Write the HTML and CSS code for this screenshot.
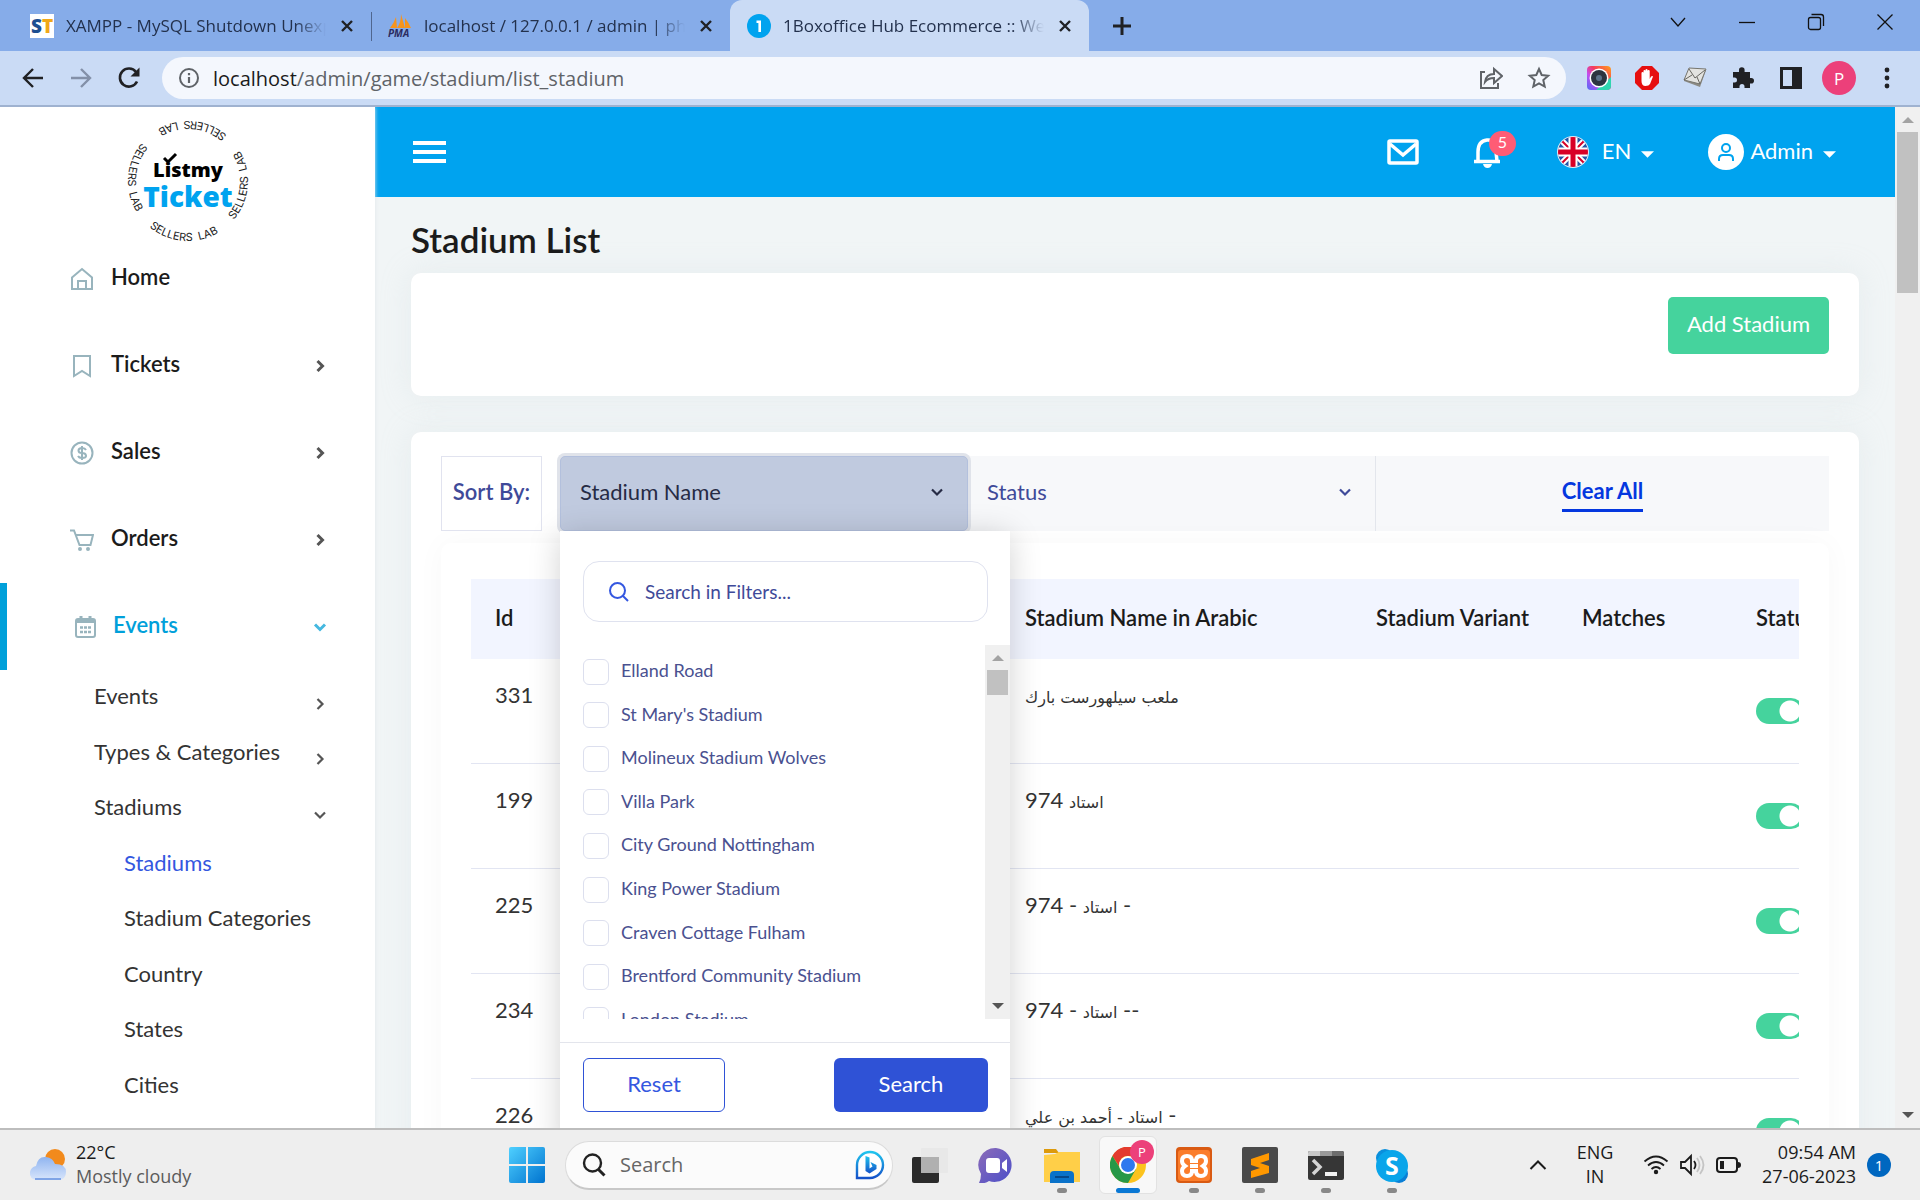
FILE: index.html
```html
<!DOCTYPE html>
<html lang="en">
<head>
<meta charset="utf-8">
<title>1Boxoffice Hub Ecommerce</title>
<link rel="stylesheet" href="styles.css">
</head>
<body>
<svg class="defs" aria-hidden="true">
  <symbol id="x" viewBox="0 0 14 14"><path d="M2 2l10 10M12 2L2 12" stroke="currentColor" stroke-width="2.4" fill="none"/></symbol>
  <symbol id="chev" viewBox="0 0 14 14"><path d="M2 4.500l5 5 5-5" stroke="currentColor" stroke-width="3" fill="none"/></symbol>
  <symbol id="chev-thin" viewBox="0 0 14 14"><path d="M2 4.500l5 5 5-5" stroke="currentColor" stroke-width="2.200" fill="none"/></symbol>
  <symbol id="up" viewBox="0 0 12 6"><path d="M0 6l6-6 6 6z" fill="currentColor"/></symbol>
  <symbol id="down" viewBox="0 0 12 6"><path d="M0 0l6 6 6-6z" fill="currentColor"/></symbol>
</svg>

<header class="tabs">
  <div class="tab">
    <svg class="fav" viewBox="0 0 24 24"><rect width="24" height="24" fill="#fff"/><text x="1" y="19" font-family="Open Sans" font-weight="800" font-size="19" fill="#1d4f91">S<tspan fill="#f0a818">T</tspan></text></svg>
    <span class="tab-title">XAMPP - MySQL Shutdown Unexpectedly</span>
    <button class="icon-btn" aria-label="Close tab"><svg class="i14"><use href="#x"/></svg></button>
  </div>
  <div class="tab sep">
    <svg class="fav" viewBox="0 0 24 24"><path d="M2 14Q6 9 8 3l1 11zM9 14q4-5 4-14l4 14zM17 14V4q4 5 6 10z" fill="#f7941d"/><text x="0" y="23" font-family="Open Sans" font-weight="700" font-style="italic" font-size="10" fill="#2b2b60">PMA</text></svg>
    <span class="tab-title">localhost / 127.0.0.1 / admin | phpMyAdmin</span>
    <button class="icon-btn" aria-label="Close tab"><svg class="i14"><use href="#x"/></svg></button>
  </div>
  <div class="tab active">
    <svg class="fav" viewBox="0 0 24 24"><circle cx="12" cy="12" r="12" fill="#00a3ef"/><path d="M9.500 6.500h4.500v11.500h-2.600V9H9.500z" fill="#fff"/></svg>
    <span class="tab-title">1Boxoffice Hub Ecommerce :: Welcome</span>
    <button class="icon-btn" aria-label="Close tab"><svg class="i14"><use href="#x"/></svg></button>
  </div>
  <button class="icon-btn new-tab" aria-label="New tab"><svg class="i18" viewBox="0 0 18 18"><path d="M9 0v18M0 9h18" stroke="#202124" stroke-width="3"/></svg></button>
  <div class="win">
    <button class="icon-btn" aria-label="Search tabs"><svg class="i18" viewBox="0 0 18 18"><path d="M2 5l7 8 7-8" class="thin"/></svg></button>
    <button class="icon-btn" aria-label="Minimize"><svg class="i18" viewBox="0 0 18 18"><path d="M1 9.500h16" class="thin"/></svg></button>
    <button class="icon-btn" aria-label="Restore"><svg class="i18" viewBox="0 0 18 18"><rect x="1.500" y="4.500" width="12" height="12" rx="2" class="thin"/><path d="M4.500 1.500H14q2.500 0 2.500 2.500v9" class="thin"/></svg></button>
    <button class="icon-btn" aria-label="Close"><svg class="i18" viewBox="0 0 18 18"><path d="M1.500 1.500l15 15M16.500 1.500l-15 15" class="thin"/></svg></button>
  </div>
</header>

<nav class="toolbar" aria-label="Browser">
  <button class="icon-btn" aria-label="Back"><svg class="i24" viewBox="0 0 24 24"><path d="M22 12H3M12 3l-9 9 9 9" stroke="#202124" stroke-width="2.400" fill="none"/></svg></button>
  <button class="icon-btn" aria-label="Forward"><svg class="i24" viewBox="0 0 24 24"><path d="M2 12h19M12 3l9 9-9 9" stroke="#8390a8" stroke-width="2.400" fill="none"/></svg></button>
  <button class="icon-btn" aria-label="Reload"><svg class="i24" viewBox="0 0 24 24"><path d="M20 15.500A9 9 0 1 1 19 6" stroke="#202124" stroke-width="2.600" fill="none"/><path d="M22.500 1.500v9h-9z" fill="#202124"/></svg></button>
  <div class="omnibox">
    <svg class="i22" viewBox="0 0 22 22"><circle cx="11" cy="11" r="9" fill="none" stroke="#5f6368" stroke-width="2"/><path d="M11 10v6M11 6v2.200" stroke="#5f6368" stroke-width="2.200"/></svg>
    <span class="url"><b>localhost</b>/admin/game/stadium/list_stadium</span>
    <svg class="i24" viewBox="0 0 24 24"><path d="M6 6H2v16h17v-5" class="grey2"/><path d="M6 16q1-8 9-8V3l8 7-8 7v-5q-6 0-9 4z" class="grey2"/></svg>
    <svg class="i24" viewBox="0 0 24 24"><path d="M12 3l2.700 6 6.500.7-4.900 4.400 1.400 6.500L12 17.300l-5.700 3.300 1.400-6.500L2.800 9.700 9.300 9z" class="grey2"/></svg>
  </div>
  <div class="exts">
    <svg class="i24" viewBox="0 0 24 24"><defs><linearGradient id="rb" x1="0" y1="1" x2="1" y2="0"><stop offset="0" stop-color="#4f6cf5"/><stop offset=".35" stop-color="#c44df0"/><stop offset=".6" stop-color="#f53a5e"/><stop offset="1" stop-color="#ffa31a"/></linearGradient></defs><rect width="24" height="24" rx="4" fill="url(#rb)"/><path d="M9 24h11q4 0 4-4v-9z" fill="#2fd6b0"/><circle cx="12" cy="12" r="9.500" fill="#fff"/><circle cx="12" cy="12" r="8" fill="#2c3440"/><circle cx="12" cy="12" r="3" fill="#5b7188"/></svg>
    <svg class="i24" viewBox="0 0 24 24"><path d="M7 0h10l7 7v10l-7 7H7l-7-7V7z" fill="#e60f0f"/><path d="M6.500 12V7q0-1 1-1t1 1v4V5q0-1 1-1t1 1v5.500V4q0-1 1-1t1 1v6.500V5q0-1 1.100-1t1.100 1v8l1.300-2.500q1.500-1 2 0L15 18q-1 2-4.500 2-4 0-4-5z" fill="#fff"/></svg>
    <svg class="i24" viewBox="0 0 24 24"><path d="M6 3l17 1-6 17-16-6z" fill="#8c8b84"/><path d="M6 2l17 1-6 15-16-4z" fill="#e3e3e0" stroke="#77766f"/><path d="M6 3l6 9L22 4M1 14l8-5M17 18l-3-7" stroke="#66655f" fill="none"/></svg>
    <svg class="i24" viewBox="0 0 24 24"><path d="M2 6h6V4a2.800 2.800 0 0 1 5.600 0v2H19v6h1.200a2.800 2.800 0 0 1 0 5.600H19V22h-5.500v-1.500a2.500 2.500 0 0 0-5 0V22H2v-5.500h1.500a2.500 2.500 0 0 0 0-5H2z" fill="#202124"/></svg>
    <svg class="i24" viewBox="0 0 24 24"><path d="M1 1h22v22H1zM4 4v16h9V4z" fill="#202124" fill-rule="evenodd"/></svg>
    <span class="profile">P</span>
    <svg class="i24" viewBox="0 0 24 24"><g fill="#202124"><circle cx="12" cy="4" r="2.400"/><circle cx="12" cy="12" r="2.400"/><circle cx="12" cy="20" r="2.400"/></g></svg>
  </div>
</nav>

<div class="page">
  <aside class="side">
    <svg class="logo" viewBox="0 0 130 130" role="img" aria-label="Listmy Ticket">
      <defs><path id="ring" d="M5 65a60 60 0 0 0 120 0a60 60 0 0 0 -120 0a60 60 0 0 0 120 0"/></defs>
      <g class="ring"><text><textPath href="#ring" startOffset="52">SELLERS&#160; LAB</textPath></text><text><textPath href="#ring" startOffset="146">SELLERS&#160; LAB</textPath></text><text><textPath href="#ring" startOffset="240">SELLERS&#160; LAB</textPath></text><text><textPath href="#ring" startOffset="335">SELLERS&#160; LAB</textPath></text></g>
      <text x="65" y="61" class="l1">Listmy</text><text x="65" y="91" class="l2">Ticket</text>
      <path d="M41 42l4 4 8-8" stroke="#000" stroke-width="3" fill="none"/>
    </svg>
    <ul class="menu">
      <li><a href="#"><svg class="i24 mi" viewBox="0 0 24 24"><path d="M2 10.500L12 2l10 8.500V22H2zM8 22v-8h8v8M8 22h8"/></svg><span>Home</span></a></li>
      <li><a href="#"><svg class="i24 mi" viewBox="0 0 24 24"><path d="M4 2h16v20l-8-5-8 5z"/></svg><span>Tickets</span><svg class="i14 right"><use href="#chev"/></svg></a></li>
      <li><a href="#"><svg class="i24 mi" viewBox="0 0 24 24"><circle cx="12" cy="12" r="10.500"/><path d="M16 9q-1-2-4-2-3.500 0-3.500 2.500T12 12t4 2.500-4 2.500q-3 0-4-2M12 5v14"/></svg><span>Sales</span><svg class="i14 right"><use href="#chev"/></svg></a></li>
      <li><a href="#"><svg class="i24 mi" viewBox="0 0 24 24"><path d="M0 2.500h4L9.500 17h11L23 7H6"/><circle cx="10" cy="21" r="1"/><circle cx="18" cy="21" r="1"/></svg><span>Orders</span><svg class="i14 right"><use href="#chev"/></svg></a></li>
      <li class="current"><a href="#"><svg class="i24 mi" viewBox="0 0 24 24"><rect x="3" y="4" width="19" height="18" rx="2"/><path d="M3 6.500h19M8 1v4M17 1v4" stroke-width="3"/><path d="M7 12.500h3m1 0h3m1 0h3M7 17h3m1 0h3m1 0h3" stroke-width="2.600"/></svg><span>Events</span><svg class="i14"><use href="#chev"/></svg></a></li>
    </ul>
    <ul class="submenu">
      <li><a href="#">Events<svg class="i14 right"><use href="#chev-thin"/></svg></a></li>
      <li><a href="#">Types &amp; Categories<svg class="i14 right"><use href="#chev-thin"/></svg></a></li>
      <li><a href="#">Stadiums<svg class="i14"><use href="#chev-thin"/></svg></a></li>
      <li class="deep on"><a href="#">Stadiums</a></li>
      <li class="deep"><a href="#">Stadium Categories</a></li>
      <li class="deep"><a href="#">Country</a></li>
      <li class="deep"><a href="#">States</a></li>
      <li class="deep"><a href="#">Cities</a></li>
    </ul>
  </aside>

  <div class="content">
    <header class="topbar">
      <button class="icon-btn burger" aria-label="Menu"><svg viewBox="0 0 33 22"><path d="M0 2h33M0 11h33M0 20h33" stroke="#fff" stroke-width="4"/></svg></button>
      <button class="icon-btn mail" aria-label="Messages"><svg viewBox="0 0 32 26"><rect x="2" y="2" width="28" height="22" rx="1" class="w"/><path d="M3 5l13 11L29 5" class="w"/></svg></button>
      <button class="icon-btn bell" aria-label="Notifications"><svg viewBox="0 0 30 32"><path d="M5 25v-9q0-11 9-12t9 12l1 9M1 25.500h26" class="w"/><path d="M10 28h9q-1 4-4.500 4T10 28z" fill="#fff"/></svg><span class="badge">5</span></button>
      <button class="pick lang"><svg class="flag" viewBox="0 0 32 32"><defs><clipPath id="fc"><circle cx="16" cy="16" r="15"/></clipPath></defs><circle cx="16" cy="16" r="16" fill="#dfe8f4"/><g clip-path="url(#fc)"><rect width="32" height="32" fill="#2455a8"/><path d="M0 0l32 32M32 0L0 32" stroke="#fff" stroke-width="6"/><path d="M0 0l32 32M32 0L0 32" stroke="#d80027" stroke-width="2"/><path d="M16 0v32M0 16h32" stroke="#fff" stroke-width="9"/><path d="M16 0v32M0 16h32" stroke="#d80027" stroke-width="5"/></g></svg><span>EN</span><svg class="caret"><use href="#down"/></svg></button>
      <button class="pick user"><svg class="ava" viewBox="0 0 36 36"><circle cx="18" cy="18" r="18" fill="#fff"/><circle cx="18" cy="14" r="4" fill="none" stroke="#00a3ef" stroke-width="2"/><path d="M11 27v-2q0-4 4-4h6q4 0 4 4v2" fill="none" stroke="#00a3ef" stroke-width="2"/></svg><span>Admin</span><svg class="caret"><use href="#down"/></svg></button>
    </header>

    <main>
      <h1>Stadium List</h1>
      <section class="card actions"><button class="add">Add Stadium</button></section>
      <section class="card list">
        <div class="filters">
          <span class="sort">Sort By:</span>
          <div class="filter-wrap">
            <button class="filter open" aria-expanded="true">Stadium Name<svg class="i14"><use href="#chev-thin"/></svg></button>
            <div class="drop">
              <div class="drop-search">
                <svg viewBox="0 0 20 20"><circle cx="8.500" cy="8.500" r="7.500"/><path d="M14 14l5 5"/></svg>
                <input type="text" placeholder="Search in Filters..." aria-label="Search in Filters">
              </div>
              <div class="options">
                <div class="opts">
                  <label><input type="checkbox"><span>Elland Road</span></label>
                  <label><input type="checkbox"><span>St Mary's Stadium</span></label>
                  <label><input type="checkbox"><span>Molineux Stadium Wolves</span></label>
                  <label><input type="checkbox"><span>Villa Park</span></label>
                  <label><input type="checkbox"><span>City Ground Nottingham</span></label>
                  <label><input type="checkbox"><span>King Power Stadium</span></label>
                  <label><input type="checkbox"><span>Craven Cottage Fulham</span></label>
                  <label><input type="checkbox"><span>Brentford Community Stadium</span></label>
                  <label><input type="checkbox"><span>London Stadium</span></label>
                </div>
                <div class="bar"><svg class="arrow off"><use href="#up"/></svg><i class="thumb short"></i><svg class="arrow end"><use href="#down"/></svg></div>
              </div>
              <div class="drop-foot"><button class="reset">Reset</button><button class="search">Search</button></div>
            </div>
          </div>
          <button class="filter status">Status<svg class="i14"><use href="#chev-thin"/></svg></button>
          <div class="clear"><a href="#">Clear All</a></div>
        </div>
        <div class="panel">
          <div class="scroll">
            <table>
              <colgroup><col class="c1"><col class="c2"><col class="c3"><col class="c4"><col class="c5"><col class="c6"></colgroup>
              <thead><tr><th>Id</th><th></th><th>Stadium Name in Arabic</th><th>Stadium Variant</th><th>Matches</th><th>Status</th></tr></thead>
              <tbody>
                <tr><td>331</td><td></td><td><span class="ar">ملعب سيلهورست بارك</span></td><td></td><td></td><td><input class="switch" type="checkbox" checked aria-label="Status 331"></td></tr>
                <tr><td>199</td><td></td><td>974 <span class="ar">استاد</span></td><td></td><td></td><td><input class="switch" type="checkbox" checked aria-label="Status 199"></td></tr>
                <tr><td>225</td><td></td><td>974 - <span class="ar">استاد</span> -</td><td></td><td></td><td><input class="switch" type="checkbox" checked aria-label="Status 225"></td></tr>
                <tr><td>234</td><td></td><td>974 - <span class="ar">استاد</span> --</td><td></td><td></td><td><input class="switch" type="checkbox" checked aria-label="Status 234"></td></tr>
                <tr><td>226</td><td></td><td><span class="ar">استاد - أحمد بن علي</span> -</td><td></td><td></td><td><input class="switch" type="checkbox" checked aria-label="Status 226"></td></tr>
              </tbody>
            </table>
          </div>
        </div>
      </section>
    </main>
  </div>
  <div class="bar main-bar"><svg class="arrow off"><use href="#up"/></svg><i class="thumb"></i><svg class="arrow end"><use href="#down"/></svg></div>
</div>

<footer class="taskbar">
  <div class="weather">
    <svg viewBox="0 0 38 34"><defs><linearGradient id="cl" x1="0" y1="0" x2="0" y2="1"><stop offset="0" stop-color="#8fb4f0"/><stop offset="1" stop-color="#d8e5fb"/></linearGradient></defs><circle cx="26" cy="11" r="10" fill="#f28a1c"/><path d="M8 32q-8-1-7-8 1-5 6-6Q9 8 17 9q7 1 9 7 11 0 11 8 0 7-7 8z" fill="url(#cl)"/><path d="M6 31h26" stroke="#7fa4e6" stroke-width="2"/></svg>
    <p>22°C<br><span>Mostly cloudy</span></p>
  </div>
  <div class="dock">
    <button class="icon-btn start" aria-label="Start"><svg class="i36" viewBox="0 0 36 36"><defs><linearGradient id="wn" x1="0" y1="0" x2="1" y2="1"><stop offset="0" stop-color="#4fd0ff"/><stop offset="1" stop-color="#0073cf"/></linearGradient></defs><path d="M2 0h15v17H0V2q0-2 2-2zM19 0h15q2 0 2 2v15H19zM0 19h17v17H2q-2 0-2-2zM19 19h17v15q0 2-2 2H19z" fill="url(#wn)"/></svg></button>
    <div class="find">
      <svg class="i24" viewBox="0 0 24 24"><circle cx="10.500" cy="10" r="8.500" fill="none" stroke="#222" stroke-width="2.400"/><path d="M16.500 16.500l6 6" stroke="#222" stroke-width="3"/></svg>
      <input type="text" placeholder="Search" aria-label="Search">
      <svg class="i30" viewBox="0 0 30 30"><defs><linearGradient id="bg" x1="0" y1="0" x2="0" y2="1"><stop offset="0" stop-color="#20c5ee"/><stop offset="1" stop-color="#1552c9"/></linearGradient></defs><path d="M2 28V15A13 13 0 1 1 15 28z" fill="#fff" stroke="url(#bg)" stroke-width="2.400"/><path d="M10.500 6l4 1.500v11l3-2-2-4.500 6 3v4l-7 4.500-4-2.500z" fill="url(#bg)"/></svg>
    </div>
    <div class="apps">
      <a href="#" aria-label="Task view"><svg class="i36" viewBox="0 0 36 36"><rect x="0" y="10" width="27" height="26" rx="2" fill="#2b2b2b"/><rect x="9" y="1" width="27" height="25" rx="1" fill="#e8e8e8" opacity=".94"/><path d="M9 10h18v16H9z" fill="#b0b0b0"/></svg></a>
      <a href="#" aria-label="Chat"><svg class="i36" viewBox="0 0 36 36"><defs><linearGradient id="ch" x1="0" y1="0" x2="1" y2="1"><stop offset="0" stop-color="#8c6bb8"/><stop offset="1" stop-color="#4b4fc9"/></linearGradient></defs><path d="M18 1a17 17 0 1 1-7 33q-4 3-10 2 2-4 2-9A17 17 0 0 1 18 1z" fill="url(#ch)"/><rect x="8" y="11" width="14" height="15" rx="3" fill="#fff"/><path d="M24 16l5-4v13l-5-4z" fill="#fff"/></svg></a>
      <a href="#" class="run" aria-label="Files"><svg class="i36" viewBox="0 0 36 36"><path d="M0 2h12l3 4H0z" fill="#dd9a0b"/><path d="M0 8l11-1 4-2h21v30H0z" fill="#ffcf48"/><path d="M6 36V28q0-4 4-4h16q4 0 4 4v8z" fill="#0a72c9"/><path d="M11 30h14" stroke="#06488a" stroke-width="2"/></svg></a>
      <a href="#" class="run front" aria-label="Chrome"><svg class="i36" viewBox="0 4 36 36"><circle cx="18" cy="22" r="18" fill="#fcc31e"/><path d="M2.400 13A18 18 0 0 1 34 13H18q-6 0-8 5l-1 5z" fill="#e33b2e"/><path d="M2.400 13A18 18 0 0 0 18 40l8-14-8 4q-5 0-8-5z" fill="#279847"/><circle cx="18" cy="22" r="9" fill="#fff"/><circle cx="18" cy="22" r="7" fill="#2f79ee"/></svg><span class="mini">P</span></a>
      <a href="#" class="run" aria-label="XAMPP"><svg class="i36" viewBox="0 0 36 36"><rect width="36" height="36" rx="4" fill="#d95a12"/><rect x="2" y="3" width="32" height="31" rx="3" fill="#fb7d2b"/><path d="M11 9q5 0 5 5h4q0-5 5-5t5 5q0 3-3 5 3 2 3 5 0 5-5 5t-5-5h-4q0 5-5 5t-5-5q0-3 3-5-3-2-3-5 0-5 5-5z" fill="none" stroke="#fff" stroke-width="4"/><path d="M14 19h8" stroke="#fff" stroke-width="4"/></svg></a>
      <a href="#" class="run" aria-label="Sublime Text"><svg class="i36" viewBox="0 0 36 36"><rect width="36" height="36" rx="2" fill="#4a4a4a"/><path d="M9 12l18-6v7l-9 3 9 3v7L9 31v-7l9-3-9-3z" fill="#ff9800"/></svg></a>
      <a href="#" class="run" aria-label="Terminal"><svg class="i36" viewBox="0 0 36 36"><rect y="4" width="36" height="29" rx="2" fill="#363636"/><path d="M0 9V6q0-2 2-2h10v5z" fill="#c9c9c9"/><path d="M12 4h12v5H12z" fill="#999"/><path d="M24 4h10q2 0 2 2v3H24z" fill="#6d6d6d"/><path d="M5 13l7 7-7 7" stroke="#d5d5d5" stroke-width="3.500" fill="none"/><path d="M17 27h12" stroke="#f2f2f2" stroke-width="4"/></svg></a>
      <a href="#" class="run" aria-label="Skype"><svg class="i36" viewBox="0 0 36 36"><circle cx="11" cy="11" r="9" fill="#0a8fdc"/><circle cx="25" cy="27" r="9" fill="#0a7fd6"/><circle cx="18" cy="19" r="16" fill="#0aa5ea"/><text x="18" y="28" text-anchor="middle" font-family="Open Sans" font-weight="700" font-size="25" fill="#fff">S</text></svg></a>
    </div>
  </div>
  <div class="tray">
    <svg class="i18" viewBox="0 0 18 18"><path d="M1.500 13L9 5.500l7.500 7.500" stroke="#1b1b1b" stroke-width="2" fill="none"/></svg>
    <p class="kb">ENG<br>IN</p>
    <div class="sys">
      <svg class="i26" viewBox="0 0 26 26"><path d="M1.500 9.500q11.500-10 23 0M5 13.500q8-7 16 0M8.500 17q4.500-4 9 0" stroke="#1b1b1b" stroke-width="1.800" fill="none"/><circle cx="13" cy="20" r="2.200" fill="#1b1b1b"/></svg>
      <svg class="i26" viewBox="0 0 26 26"><path d="M2 10h4l6-6v18l-6-6H2z" stroke="#1b1b1b" stroke-width="1.800" fill="none"/><path d="M15 9q3 4 0 8" stroke="#1b1b1b" stroke-width="1.800" fill="none"/><path d="M18 6q5 7 0 14M21 4q7 9 0 18" stroke="#c4c4c4" stroke-width="1.800" fill="none"/></svg>
      <svg class="i26" viewBox="0 0 26 26"><rect x="2" y="6" width="20" height="14" rx="3" fill="none" stroke="#1b1b1b" stroke-width="2"/><path d="M5 9h4v8H5zM23 10q3 0 3 3t-3 3z" fill="#1b1b1b"/></svg>
    </div>
    <p class="clock">09:54 AM<br>27-06-2023</p>
    <span class="count">1</span>
  </div>
</footer>
</body>
</html>
```
FILE: styles.css
```css
*{box-sizing:border-box}
body{margin:0;height:100vh;display:flex;flex-direction:column;overflow:hidden;font-family:Lato,"DejaVu Sans",sans-serif;font-size:22px;color:#1b1b1b;background:#fff}
button,input{font:inherit;color:inherit}
button{border:0;background:none;padding:0}
a{color:inherit;text-decoration:none}
ul,p,h1{margin:0;padding:0;list-style:none}
svg{display:block;flex:none}
.defs{position:absolute;width:0;height:0}
.i14{width:14px;height:14px}.i18{width:18px;height:18px}.i22{width:22px;height:22px}.i24{width:24px;height:24px}
.i26{width:26px;height:26px}.i30{width:30px;height:30px}.i36{width:36px;height:36px}
.icon-btn{display:grid;place-items:center;flex:none}
.thin{fill:none;stroke:#111;stroke-width:1.3}
.grey2{fill:none;stroke:#5f6368;stroke-width:2}
.right{transform:rotate(-90deg)}

/* browser chrome */
.tabs,.toolbar,.taskbar{font-family:"Open Sans",sans-serif;flex:none}
.tabs{display:flex;height:51px;background:#86ace9}
.tab{display:flex;align-items:center;gap:12px;width:359px;padding:0 17px;font-size:17px;color:#23314d}
.tab:first-child{width:371px;padding-left:30px}
.tab .fav{width:24px;height:24px}
.tab-title{flex:1;overflow:hidden;white-space:nowrap;mask-image:linear-gradient(90deg,#000 88%,transparent);-webkit-mask-image:linear-gradient(90deg,#000 88%,transparent)}
.sep{background:linear-gradient(#4f668f,#4f668f) 0 12px/1px 29px no-repeat}
.active{background:#cadbf5;border-radius:12px 12px 0 0}
.tab .i14{color:#202124;margin-left:2px}
.new-tab{padding:0 24px}
.win{display:flex;gap:51px;margin-left:auto;padding:0 26px;height:44px}
.toolbar{display:flex;align-items:center;gap:24px;height:56px;padding:0 21px;background:#cadbf5;border-bottom:2px solid #9fb2d0}
.omnibox{flex:1;display:flex;align-items:center;gap:24px;height:42px;margin:0 -3px;padding:0 15px 0 16px;border-radius:21px;background:#f4f7fd}
.url{flex:1;margin-left:-11px;font-size:20px;color:#5f6368;white-space:nowrap}
.url b{font-weight:400;color:#1b1b1b}
.exts{display:flex;align-items:center;gap:24px}
.profile{display:grid;place-items:center;width:34px;height:34px;margin:0 -5px;border-radius:50%;background:#ec407a;color:#fff;font-size:17px}

/* page */
.page{flex:1;min-height:0;display:flex;overflow:hidden}
.side{flex:none;width:375px;background:#fff;box-shadow:0 0 4px #dfe6e8;z-index:1}
.logo{width:130px;height:130px;margin:9px auto 0 123px}
.ring{font:400 11px Inter,sans-serif;fill:#222}
.l1,.l2{text-anchor:middle;font-family:"Noto Sans",sans-serif;font-weight:900}
.l1{font-size:20px;fill:#000}.l2{font-size:28px;fill:#00a3ef}
.menu{margin-top:-11px}
.menu a{display:flex;align-items:center;height:87px;padding:0 48px 0 70px;font-weight:600}
.menu span{flex:1;margin-left:17px;padding-bottom:4px}
.menu .i14{color:#555}
.mi{fill:none;stroke:#98b4bd;stroke-width:2}
.menu .current{border-left:7px solid #00a0da;color:#00a0da;font-weight:700}
.menu .current a{padding-left:66px}
.menu .current span{margin-left:16px}
.menu .current .i14{color:#45b8e0}
.submenu{display:grid;grid-template-rows:repeat(8,1fr);height:444px;color:#333}
.submenu a{display:flex;align-items:center;justify-content:space-between;height:100%;padding:0 48px 4px 94px}
.submenu .i14{margin-top:16px;color:#555}
.submenu .deep a{padding-left:124px}
.submenu .on{color:#3457e0}

.content{flex:1;min-width:0;background:#f1f5f6}
.topbar{display:flex;align-items:center;height:90px;padding:0 59px 0 38px;background:#00a3ef;color:#fff}
.w{fill:none;stroke:#fff;stroke-width:3.500}
.burger svg{width:33px;height:22px}
.mail{margin-left:auto}
.mail svg{width:32px;height:26px}
.bell{position:relative;margin:0 54px}
.bell svg{width:30px;height:32px}
.badge{position:absolute;left:16px;top:-5px;width:27px;height:25px;border-radius:13px;background:#ff5c75;font-size:16px;line-height:22px}
.pick{display:flex;align-items:center}
.pick span{padding-bottom:4px}
.flag{width:32px;height:32px;margin-right:13px}
.ava{width:36px;height:36px;margin-right:6px}
.caret{width:13px;height:7px;margin:4px 0 0 10px}
.lang{margin-right:54px}
main{padding:24px 36px 0}
h1{font-size:35px;line-height:36px;font-weight:600}
.card{border-radius:10px;background:#fff;box-shadow:0 0 30px rgba(200,215,220,.25)}
.actions{display:flex;justify-content:flex-end;height:123px;margin:16px 0 36px;padding:24px 30px}
.add{width:161px;height:57px;padding-bottom:4px;border-radius:5px;background:#45d39d;color:#fff}
.list{padding:24px 30px 0}
.filters{display:flex;height:75px;background:linear-gradient(#f7f8fa,#f7f8fa) right/calc(100% - 120px) no-repeat;color:#3f4a99}
.sort{display:grid;place-items:center;width:101px;margin-right:18px;padding-bottom:4px;border:1px solid #e1e3ef;font-weight:600;background:#fff}
.filter-wrap{position:relative;width:408px}
.filter{display:flex;align-items:center;justify-content:space-between;width:408px;height:75px;padding:0 23px 4px 19px}
.open{border:1px solid #b3c0dd;border-radius:5px;background:#c0cadf;box-shadow:0 0 0 3px #e0e3ea;color:#262b45}
.status{border-right:1px solid #e3e6ec}
.clear{flex:1;display:grid;place-items:center}
.clear a{padding-bottom:3px;border-bottom:3px solid #0437df;color:#0437df;font-weight:700;line-height:30px}
.drop{position:absolute;left:0;top:75px;width:450px;height:620px;padding-top:30px;background:#fff;box-shadow:0 4px 30px rgba(0,0,0,.18);z-index:2}
.drop-search{display:flex;align-items:center;height:61px;margin:0 22px 0 23px;padding:0 25px;gap:16px;border:1px solid #dfe2ef;border-radius:16px}
.drop-search svg{width:20px;height:20px;fill:none;stroke:#3457e0;stroke-width:2}
.drop-search input{flex:1;min-width:0;border:0;padding:0;background:none;font-size:19px;outline:0}
.drop-search input::placeholder{color:#3f4a99;opacity:1}
.options{display:flex;height:374px;margin-top:23px;overflow:hidden}
.opts{flex:1;display:grid;grid-template-rows:repeat(9,1fr);height:392px;padding-left:23px;margin-top:5px;font-size:18px;color:#4a5190}
.opts label{display:flex;align-items:center;gap:12px}
.opts span{padding-bottom:3px}
.opts input{appearance:none;width:26px;height:26px;margin:0;border:1px solid #dcdfee;border-radius:6px;background:#fff}
.bar{flex:none;display:flex;flex-direction:column;align-items:center;width:25px;padding:10px 0;background:#f0f0f0}
.arrow{width:12px;height:6px;color:#555}
.arrow.off{color:#a3a3a3}
.arrow.end{margin-top:auto}
.thumb{width:21px;height:161px;margin-top:9px;background:#c1c1c1}
.thumb.short{height:25px}
.drop-foot{display:flex;justify-content:space-between;margin-top:23px;padding:15px 22px 15px 23px;border-top:1px solid #e3e5ec}
.drop-foot button{height:54px;padding-bottom:4px;border-radius:6px}
.reset{width:142px;border:1px solid #2f52d6;color:#3457e0}
.search{width:154px;background:#2f52d6;color:#fff}
.panel{margin-top:12px;padding:36px 30px 0;border-radius:10px;box-shadow:0 0 30px rgba(0,0,0,.03)}
.scroll{overflow:hidden}
table{width:1381px;table-layout:fixed;border-collapse:separate;border-spacing:0}
.c1{width:100px}.c2{width:430px}.c3{width:351px}.c4{width:206px}.c5{width:174px}.c6{width:120px}
th,td{text-align:left;padding:0 24px;white-space:nowrap}
th{height:80px;padding-bottom:4px;background:#f2f5ff;font-weight:600}
td{height:105px;padding-top:21px;vertical-align:top;line-height:30px;border-bottom:1px solid #e2e5f2;color:#333}
.ar{font-family:"DejaVu Sans",sans-serif;font-size:16px}
.switch{appearance:none;display:block;width:48px;height:26px;margin:18px 0 0;border-radius:13px;background:radial-gradient(circle at 34px 13px,#fff 10px,#45d39d 11px)}

/* taskbar */
.taskbar{display:flex;align-items:center;justify-content:space-between;height:72px;padding:0 29px;border-top:2px solid #bdbdbd;background:#eee;font-size:18px;line-height:24px}
.taskbar p{padding-bottom:2px}
.weather{display:flex;align-items:center;gap:9px;width:480px}
.weather svg{width:38px;height:34px}
.weather span{color:#5b5b5b}
.dock{display:flex;align-items:center;flex:1}
.find{display:flex;align-items:center;gap:14px;width:328px;height:49px;margin:0 4px 0 20px;padding:0 7px 0 16px;border:1px solid #dcdcdc;border-bottom:2px solid #c8c8c8;border-radius:24px;background:#fbfbfb}
.find input{flex:1;min-width:0;border:0;padding:0;background:none;font-size:20px;outline:0}
.find input::placeholder{color:#666;opacity:1}
.apps{display:flex}
.apps a{position:relative;display:grid;place-items:center;width:58px;height:58px;margin:0 4px;border-radius:6px}
.run::after{content:"";position:absolute;left:24px;bottom:1px;width:10px;height:5px;border-radius:3px;background:#888}
.apps .front{background:#f8f8f8;border:1px solid #e2e2e2}
.front::after{left:16px;bottom:0;width:24px;background:#0a78d4}
.mini{position:absolute;right:2px;top:3px;width:24px;height:24px;border-radius:50%;background:#ec407a;color:#fff;font-size:13px;text-align:center}
.tray{display:flex;align-items:center}
.kb{width:48px;margin:0 24px;text-align:center}
.sys{display:flex;gap:10px}
.clock{width:108px;margin:0 11px 0 7px;text-align:right}
.count{width:24px;height:24px;border-radius:50%;background:#0067c0;color:#fff;font-size:15px;text-align:center}
```
